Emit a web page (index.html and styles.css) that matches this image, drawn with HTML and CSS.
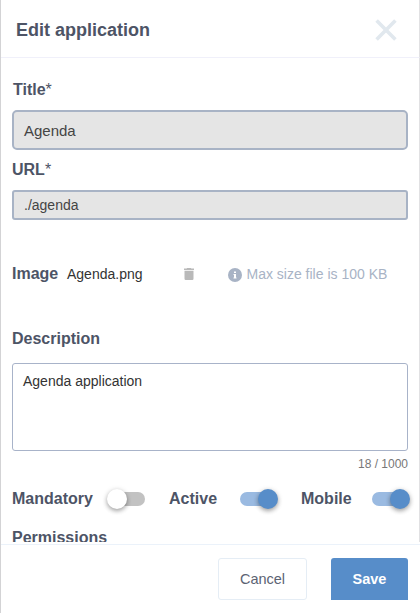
FILE: index.html
```html
<!DOCTYPE html>
<html lang="en">
<head>
<meta charset="utf-8">
<title>Edit application</title>
<link rel="stylesheet" href="styles.css">
</head>
<body>
<div class="drawer">
  <header class="header">
    <h1 class="heading">Edit application</h1>
    <svg class="close" viewBox="0 0 22 22"><path d="M1.600 1.600 20.400 20.400M20.400 1.600 1.600 20.400"/></svg>
  </header>
  <main class="content">
    <div class="label label-title"><span>Title<span class="star">*</span></span></div>
    <div class="field field-title">Agenda</div>
    <div class="label label-url"><span>URL<span class="star">*</span></span></div>
    <div class="field field-url">./agenda</div>
    <div class="image-row">
      <span class="image-label">Image</span>
      <span class="file">Agenda.png</span>
      <svg class="trash" viewBox="0 0 10 12"><path d="M.5 2.800h9v8q0 1.200-1.200 1.200H1.700Q.5 12 .5 10.800zM0 .6h2.600L3.200 0h3.600l.6.6H10V2H0z"/></svg>
      <svg class="info" viewBox="0 0 14 14"><circle cx="7" cy="7" r="7"/><path d="M6 3.500h2v1.500H6zM5.500 6H8v3.500h.5v1h-3v-1H6V7h-.5z"/></svg>
      <span class="hint">Max size file is 100 KB</span>
    </div>
    <div class="label label-description"><span>Description</span></div>
    <div class="textarea">Agenda application</div>
    <div class="counter">18 / 1000</div>
    <div class="toggles">
      <span class="toggle-label mandatory">Mandatory</span><span class="switch"><span class="knob"></span></span>
      <span class="toggle-label active">Active</span><span class="switch on"><span class="knob"></span></span>
      <span class="toggle-label mobile">Mobile</span><span class="switch on"><span class="knob"></span></span>
    </div>
    <div class="permissions">Permissions</div>
  </main>
  <footer class="footer">
    <div class="button cancel"><span>Cancel</span></div>
    <div class="button save"><span>Save</span></div>
  </footer>
</div>
</body>
</html>
```
FILE: styles.css
```css
* { box-sizing: border-box; }
body {
  margin: 0;
  background: #fff;
  color: #4d5466;
  font-family: "Liberation Sans", Arial, sans-serif;
  font-size: 16px;
}
.drawer {
  display: flex;
  flex-direction: column;
  width: 420px;
  height: 613px;
  border-left: 1px solid #d3d3d5;
  overflow: hidden;
}
.header {
  display: flex;
  align-items: center;
  justify-content: space-between;
  height: 58px;
  padding: 2px 22px 0 15px;
  border-bottom: 1px solid #f0f0fa;
  border-right: 1px solid #e1e1e3;
}
.heading { margin: 0; font-size: 18px; line-height: 20px; }
.close { width: 22px; height: 22px; fill: none; stroke: #e1e8ee; stroke-width: 3.6; }
.content {
  height: 484px;
  padding: 0 11px;
  border-right: 1px solid #e1e1e3;
  overflow: hidden;
}
.label { display: flex; align-items: center; font-weight: bold; }
.star { font-weight: normal; }
.label-title { height: 52px; padding: 11px 0 0 1px; }
.label-url { height: 40px; }
.field {
  display: flex;
  align-items: center;
  border: 2px solid #a8b3c5;
  background: #e5e5e5;
  color: #444;
}
.field-title { height: 40px; padding: 1px 10px 0; border-radius: 5px; font-size: 15px; }
.field-url { height: 30px; padding: 0 10px; border-radius: 3px; font-size: 14px; }
.image-row { display: flex; align-items: center; height: 107px; font-size: 14px; }
.image-label { width: 55px; font-size: 16px; font-weight: bold; }
.file { width: 117px; padding-top: 1px; color: #333; }
.trash { width: 10px; height: 12px; fill: #b9b9b9; }
.info { width: 14px; height: 14px; margin: 2px 0 0 34px; fill: #a8b3c5; }
.info path { fill: #fff; }
.hint { margin-left: 4.5px; color: #a8b3c5; white-space: nowrap; }
.label-description { height: 36px; padding-bottom: 13px; }
.textarea {
  height: 88px;
  padding: 9px 10px;
  border: 1px solid #a8b3c9;
  border-radius: 3px;
  color: #333;
  font-size: 14px;
  line-height: 17px;
}
.counter { height: 27px; color: #777; font-size: 12px; line-height: 27px; text-align: right; }
.toggles { display: flex; align-items: center; height: 42px; font-weight: bold; }
.toggle-label.mandatory { width: 97px; flex: none; }
.toggle-label.active { width: 71px; flex: none; margin-left: 24px; }
.toggle-label.mobile { width: 71px; flex: none; margin-left: 25px; }
.switch {
  display: flex;
  align-items: center;
  flex: none;
  width: 36px;
  height: 14px;
  border-radius: 7px;
  background: #c2c2c2;
}
.knob {
  flex: none;
  width: 20px;
  height: 20px;
  margin-left: -2px;
  border-radius: 50%;
  background: #fff;
  box-shadow: 0 2px 4px rgba(0,0,0,.3), 0 1px 6px rgba(0,0,0,.12);
}
.on { background: #9abae1; }
.on .knob { margin-left: 18px; background: #578dc9; }
.permissions { padding-top: 9px; font-weight: bold; line-height: 18px; }
.footer {
  display: flex;
  justify-content: flex-end;
  gap: 24px;
  height: 69px;
  margin-top: 2px;
  padding: 13px 12px 0 0;
  border-top: 1px solid #ebf2fa;
}
.button {
  display: flex;
  align-items: center;
  justify-content: center;
  height: 42px;
  border-radius: 3px;
}
.cancel { width: 89px; padding-bottom: 1px; border: 1px solid #e5edf5; color: #5c6373; font-size: 14.5px; }
.save { width: 77px; padding-bottom: 1px; border-radius: 3px 3px 0 0; background: #578dc9; color: #fff; font-size: 14.5px; font-weight: bold; }
```
